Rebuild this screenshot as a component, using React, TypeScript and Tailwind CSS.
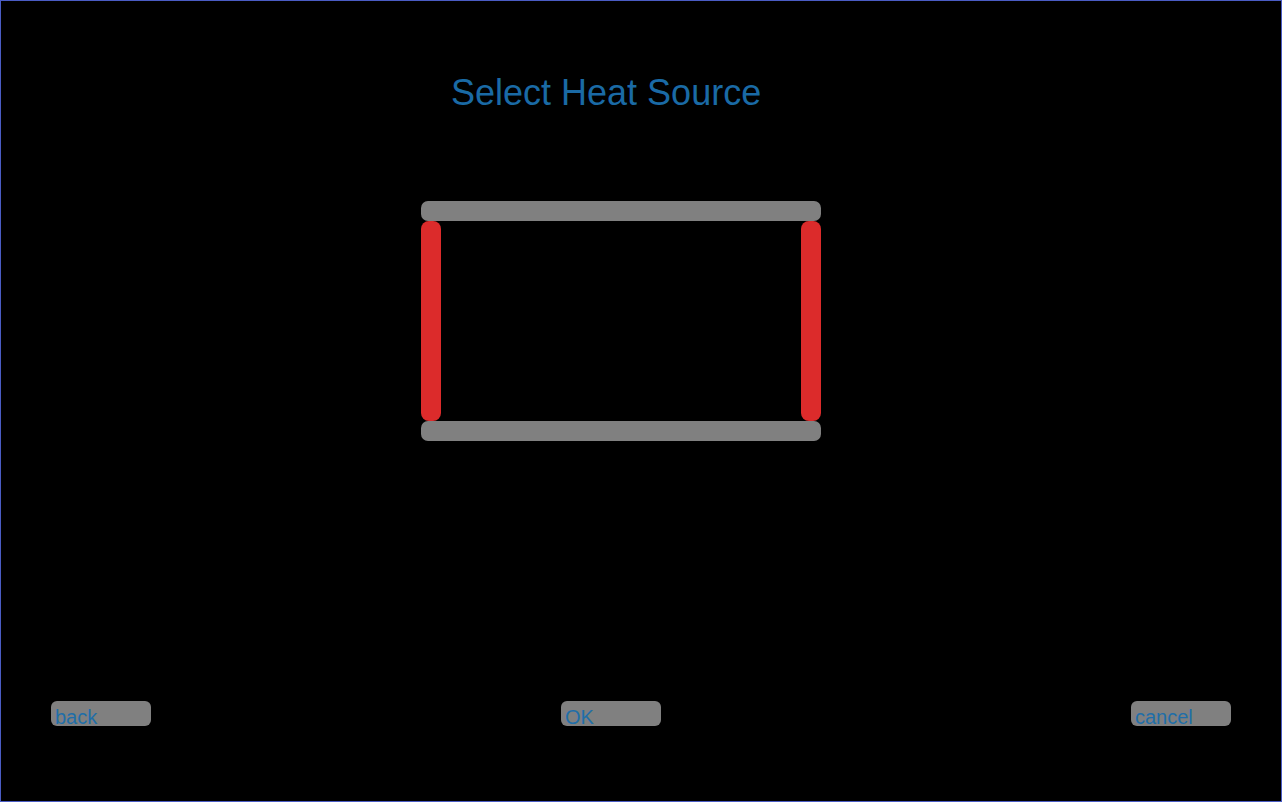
import React from "react";

const NavButton = ({ label, className }: { label: string; className?: string }) => {
  return (
    <button
      className={`w-[100px] h-[25px] bg-[#808080] rounded-[6px] pl-[4px] pt-[5px] flex items-start text-left text-[20px] leading-[23px] text-[#1f6ea8] overflow-visible ${className ?? ""}`}
    >
      <span>{label}</span>
    </button>
  );
};

const App = () => {
  return (
    <div
      className="w-[1282px] h-[802px] bg-black border border-[#4a5cc4] flex flex-col"
      style={{ fontFamily: '"Liberation Sans", Arial, sans-serif' }}
    >
      <h1 className="mt-[71px] pl-[450px] text-[36px] leading-[41px] font-normal text-[#1a6aa5]">
        Select Heat Source
      </h1>

      {/* heat source frame */}
      <div className="mt-[88px] ml-[420px] w-[400px] flex flex-col">
        <div className="h-[20px] bg-[#808080] rounded-[7px]" />
        <div className="h-[200px] flex justify-between">
          <div className="w-[20px] bg-[#dc2b2b] rounded-[8px]" />
          <div className="w-[20px] bg-[#dc2b2b] rounded-[8px]" />
        </div>
        <div className="h-[20px] bg-[#808080] rounded-[7px]" />
      </div>

      <div className="mt-[260px] flex pl-[50px]">
        <NavButton label="back" />
        <NavButton label="OK" className="ml-[410px]" />
        <NavButton label="cancel" className="ml-[470px]" />
      </div>
    </div>
  );
};

export default App;
